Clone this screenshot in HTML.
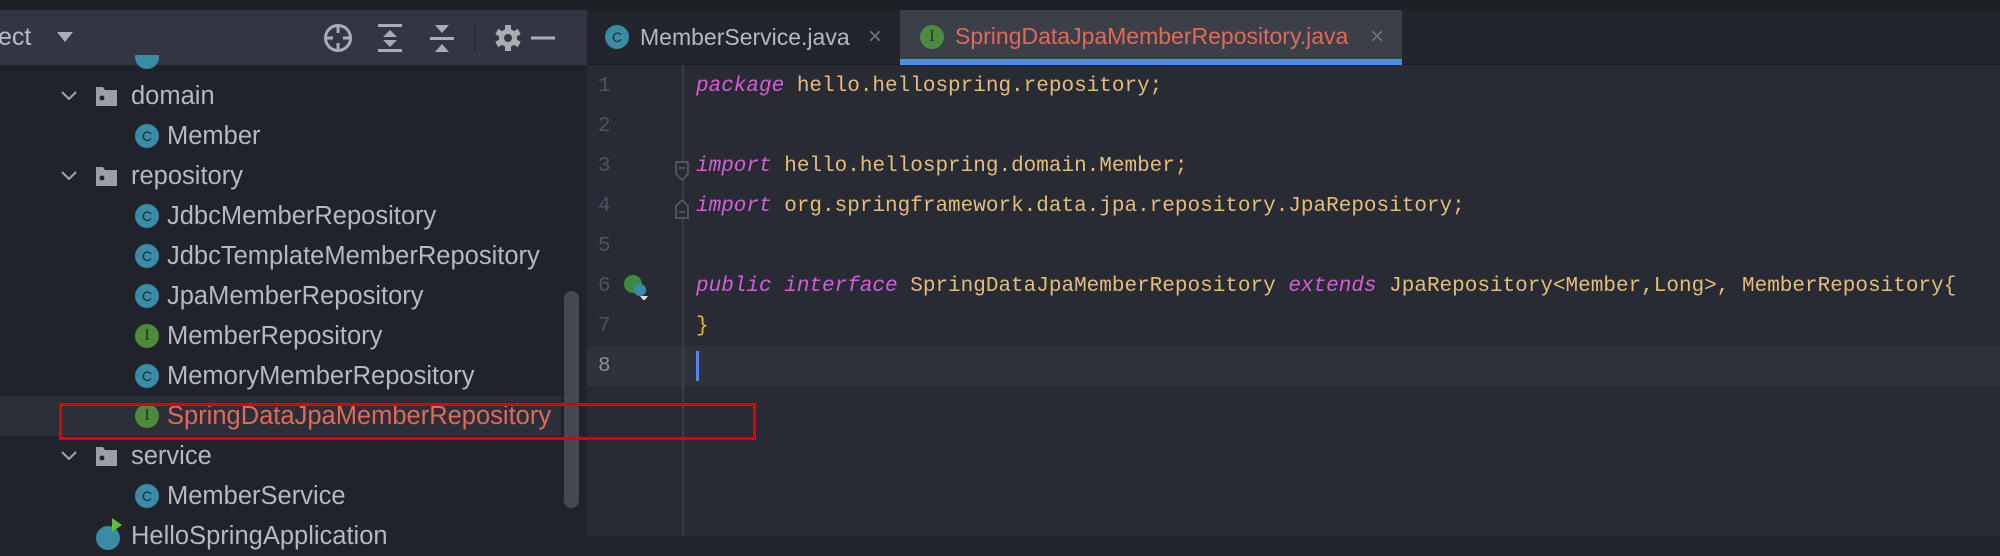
<!DOCTYPE html>
<html><head><meta charset="utf-8"><style>
*{margin:0;padding:0;box-sizing:border-box}
body{width:2000px;height:536px;overflow:hidden;background:#21232a;font-family:"Liberation Sans",sans-serif;position:relative}
.a{position:absolute}
.top{left:0;top:0;width:2000px;height:10px;background:#1e2026}
.hdr{left:0;top:10px;width:587px;height:55px;background:#323642}
.tabs{left:587px;top:10px;width:1413px;height:55px;background:#22252c;border-bottom:1px solid #1b1d22}
.tree{left:0;top:65px;width:587px;height:471px;background:#21232a}
.ed{left:587px;top:65px;width:1413px;height:471px;background:#282b33}
.row{position:absolute;height:40px;line-height:40px;font-size:25.5px;color:#b4b8c0;white-space:nowrap}
.ic{position:absolute;width:24px;height:24px;border-radius:50%;color:#1d2a33;font-size:14px;line-height:24px;text-align:center;font-family:"Liberation Sans",sans-serif}
.c{background:#3b8aa6}.i{background:#4e8a3e;color:#1f3318;font-family:"Liberation Serif",serif;font-size:16px}
.code{position:absolute;left:696px;font-family:"Liberation Mono",monospace;font-size:21px;color:#e3bd7a;white-space:pre;height:40px;line-height:40px}
.k{color:#d45ed8;font-style:italic}
.ln{position:absolute;left:598px;font-family:"Liberation Mono",monospace;font-size:21px;color:#4c5260;height:40px;line-height:40px}
</style></head><body>
<div class="a top"></div>
<div class="a tree"></div>
<div class="a ed"></div>
<div class="a hdr"></div>
<div class="a tabs"></div>
<!-- header -->
<div class="a" style="left:-2px;top:10px;height:55px;line-height:55px;font-size:25px;color:#b8bcc4">ect</div>
<div class="a" style="left:57px;top:32px;width:0;height:0;border-left:8px solid transparent;border-right:8px solid transparent;border-top:10px solid #a9adb5"></div>
<svg class="a" style="left:320px;top:20px" width="260" height="36" viewBox="0 0 260 36">
<g fill="none" stroke="#a9adb3" stroke-width="3"><circle cx="18" cy="18" r="12.5"/></g>
<g fill="#a9adb3"><rect x="16.5" y="5" width="3" height="8"/><rect x="16.5" y="23" width="3" height="8"/><rect x="5" y="16.5" width="8" height="3"/><rect x="23" y="16.5" width="8" height="3"/>
<rect x="58" y="4" width="24" height="3"/><rect x="58" y="29" width="24" height="3"/><polygon points="63,17 77,17 70,10"/><polygon points="63,20 77,20 70,27"/>
<rect x="110" y="17" width="24" height="3"/><polygon points="115,5 129,5 122,13"/><polygon points="115,32 129,32 122,24"/>
<rect x="154" y="4" width="2" height="28" fill="#2a2d36"/>
<rect x="211" y="16.5" width="24" height="3"/></g>
<g transform="translate(188,18)" fill="#a9adb3"><circle r="9"/><g><rect x="-3" y="-13" width="6" height="26"/><rect x="-3" y="-13" width="6" height="26" transform="rotate(60)"/><rect x="-3" y="-13" width="6" height="26" transform="rotate(120)"/></g><circle r="4" fill="#323642"/></g>
</svg>
<!-- tabs -->
<div class="ic c a" style="left:605px;top:25px">C</div>
<div class="a" style="left:640px;top:10px;height:55px;line-height:55px;font-size:23px;color:#b4b8c0">MemberService.java</div>
<div class="a" style="left:868px;top:10px;height:55px;line-height:53px;font-size:24px;color:#6e737c">×</div>
<div class="a" style="left:900px;top:10px;width:502px;height:55px;background:#3b3f48"></div>
<div class="a" style="left:900px;top:59px;width:502px;height:6px;background:#4f8ae8"></div>
<div class="ic i a" style="left:920px;top:25px">I</div>
<div class="a" style="left:955px;top:10px;height:52px;line-height:53px;font-size:23px;color:#e0695a">SpringDataJpaMemberRepository.java</div>
<div class="a" style="left:1370px;top:10px;height:52px;line-height:53px;font-size:24px;color:#6e737c">×</div>
<!-- tree -->
<div class="a" style="left:0;top:396px;width:561px;height:40px;background:#2c2f37"></div>
<div class="ic c a" style="left:135px;top:55px;width:24px;height:14px;border-radius:0 0 12px 12px"></div>
<svg class="a" style="left:0;top:65px" width="120" height="471">
<g fill="none" stroke="#a3a7ae" stroke-width="2"><polyline points="62,27 69,34 76,27"/><polyline points="62,107 69,114 76,107"/><polyline points="62,387 69,394 76,387"/></g>
<g fill="#9ba0a8"><path d="M96,22 h7 l2,3 h12 v16 h-21z"/><path d="M96,102 h7 l2,3 h12 v16 h-21z"/><path d="M96,382 h7 l2,3 h12 v16 h-21z"/></g>
<g fill="#21232a"><circle cx="102" cy="33" r="2.5"/><circle cx="102" cy="113" r="2.5"/><circle cx="102" cy="393" r="2.5"/></g>
</svg>
<div class="row" style="left:131px;top:76px">domain</div>
<div class="ic c a" style="left:135px;top:124px">C</div><div class="row" style="left:167px;top:116px">Member</div>
<div class="row" style="left:131px;top:156px">repository</div>
<div class="ic c a" style="left:135px;top:204px">C</div><div class="row" style="left:167px;top:196px">JdbcMemberRepository</div>
<div class="ic c a" style="left:135px;top:244px">C</div><div class="row" style="left:167px;top:236px">JdbcTemplateMemberRepository</div>
<div class="ic c a" style="left:135px;top:284px">C</div><div class="row" style="left:167px;top:276px">JpaMemberRepository</div>
<div class="ic i a" style="left:135px;top:324px">I</div><div class="row" style="left:167px;top:316px">MemberRepository</div>
<div class="ic c a" style="left:135px;top:364px">C</div><div class="row" style="left:167px;top:356px">MemoryMemberRepository</div>
<div class="ic i a" style="left:135px;top:404px">I</div><div class="row" style="left:167px;top:396px;color:#e0695a">SpringDataJpaMemberRepository</div>
<div class="row" style="left:131px;top:436px">service</div>
<div class="ic c a" style="left:135px;top:484px">C</div><div class="row" style="left:167px;top:476px">MemberService</div>
<div class="ic c a" style="left:96px;top:526px"></div><div class="a" style="left:112px;top:518px;width:0;height:0;border-top:7px solid transparent;border-bottom:7px solid transparent;border-left:10px solid #5bbf3a"></div>
<div class="row" style="left:131px;top:516px">HelloSpringApplication</div>
<div class="a" style="left:564px;top:291px;width:15px;height:217px;border-radius:8px;background:#45484f"></div>
<!-- editor -->
<div class="a" style="left:587px;top:346px;width:1413px;height:40px;background:#2f323b"></div>
<div class="a" style="left:682px;top:65px;width:2px;height:471px;background:#3a3d45"></div>
<div class="ln" style="top:67px">1</div><div class="ln" style="top:107px">2</div><div class="ln" style="top:147px">3</div><div class="ln" style="top:187px">4</div><div class="ln" style="top:227px">5</div><div class="ln" style="top:267px">6</div><div class="ln" style="top:307px">7</div><div class="ln" style="top:347px;color:#8a8f99">8</div>
<svg class="a" style="left:620px;top:150px" width="80" height="150">
<g fill="#282b33" stroke="#5a5f68" stroke-width="1.5"><path d="M56,12 h12 v12 l-6,6 l-6,-6z"/><path d="M56,68 v-12 l6,-6 l6,6 v12z"/></g>
<g stroke="#5a5f68" stroke-width="1.5"><line x1="59" y1="18" x2="65" y2="18"/><line x1="59" y1="62" x2="65" y2="62"/></g>
<circle cx="13" cy="134" r="9" fill="#3d8a45"/><circle cx="20" cy="140" r="6" fill="#3b8aa6"/><polygon points="20,146 28,146 24,151" fill="#ddd"/>
</svg>
<div class="code" style="top:67px"><span class="k">package</span> hello.hellospring.repository;</div>
<div class="code" style="top:147px"><span class="k">import</span> hello.hellospring.domain.Member;</div>
<div class="code" style="top:187px"><span class="k">import</span> org.springframework.data.jpa.repository.JpaRepository;</div>
<div class="code" style="top:267px"><span class="k">public interface</span> SpringDataJpaMemberRepository <span class="k">extends</span> JpaRepository&lt;Member,Long&gt;, MemberRepository{</div>
<div class="code" style="top:307px;color:#e8b73a">}</div>
<div class="a" style="left:696px;top:351px;width:3px;height:30px;background:#4f8ae8"></div>
<!-- red box -->
<div class="a" style="left:59px;top:403px;width:697px;height:37px;border:3px solid #e00000"></div>
</body></html>
